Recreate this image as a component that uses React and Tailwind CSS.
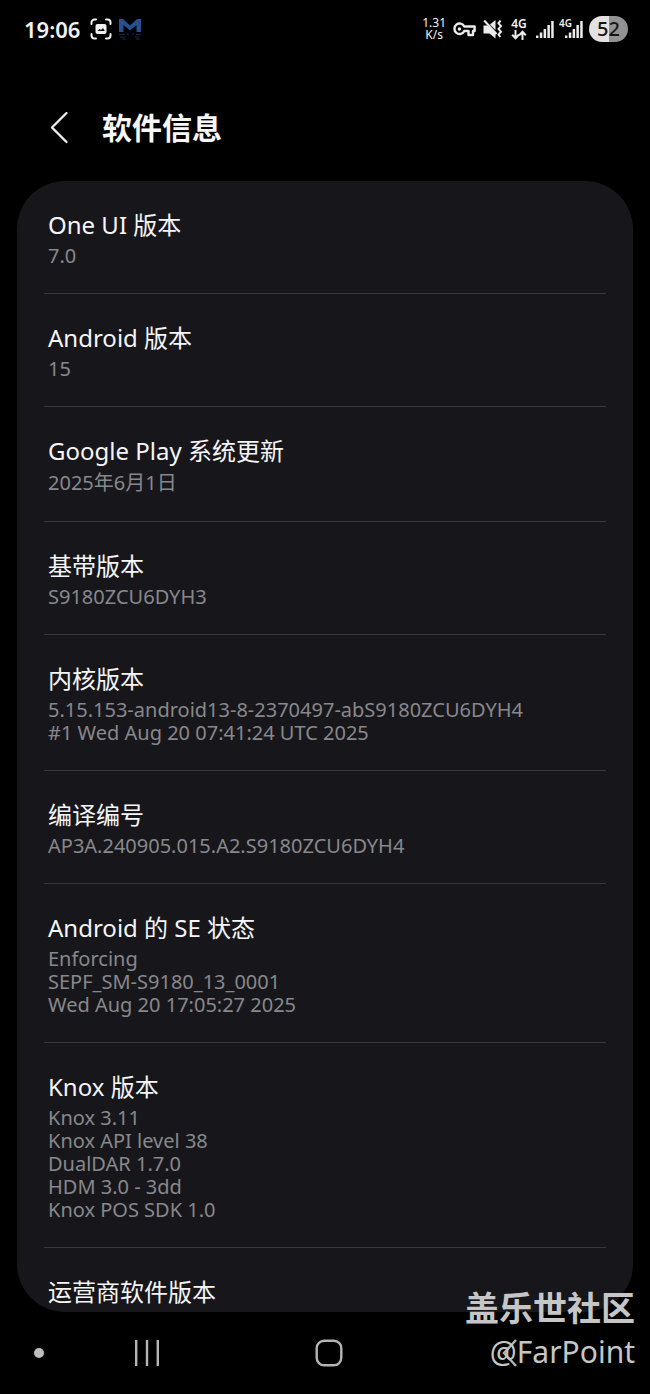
import React from 'react';

const items = [
  { title: 'One UI 版本', lines: ['7.0'] },
  { title: 'Android 版本', lines: ['15'] },
  { title: 'Google Play 系统更新', lines: ['2025年6月1日'], tall: true },
  { title: '基带版本', lines: ['S9180ZCU6DYH3'] },
  {
    title: '内核版本',
    lines: ['5.15.153-android13-8-2370497-abS9180ZCU6DYH4', '#1 Wed Aug 20 07:41:24 UTC 2025'],
  },
  { title: '编译编号', lines: ['AP3A.240905.015.A2.S9180ZCU6DYH4'] },
  {
    title: 'Android 的 SE 状态',
    lines: ['Enforcing', 'SEPF_SM-S9180_13_0001', 'Wed Aug 20 17:05:27 2025'],
  },
  {
    title: 'Knox 版本',
    lines: ['Knox 3.11', 'Knox API level 38', 'DualDAR 1.7.0', 'HDM 3.0 - 3dd', 'Knox POS SDK 1.0'],
  },
];

const SignalBars = () => (
  <svg width="18" height="18" viewBox="0 0 18 18" fill="#ececec">
    <rect x="0" y="15.5" width="2.4" height="2.5" />
    <rect x="3.8" y="12.5" width="2.5" height="5.5" />
    <rect x="7.6" y="9" width="2.5" height="9" />
    <rect x="11.4" y="5" width="2.5" height="13" />
    <rect x="15.2" y="1" width="2.5" height="17" />
  </svg>
);

const StatusBar = () => (
  <div className="flex h-[58px] items-center justify-between pl-6 pr-[22px] text-[#f2f2f2]">
    <div className="flex items-center">
      <span className="text-[22px] leading-[26px] font-semibold">19:06</span>

      {/* Screenshot notification */}
      <svg className="ml-[10px]" width="22" height="22" viewBox="0 0 22 22" fill="none" stroke="#f0f0f0" strokeWidth="2" strokeLinecap="round">
        <path d="M1.5 6V4.5a3 3 0 0 1 3-3H6M16 1.5h1.5a3 3 0 0 1 3 3V6M20.5 16v1.5a3 3 0 0 1-3 3H16M6 20.5H4.5a3 3 0 0 1-3-3V16" />
        <rect x="5.5" y="6" width="11" height="10" rx="2" fill="#f0f0f0" stroke="none" />
        <path d="M7.5 13l2-2 1.5 1 2-2 1.8 3z" fill="#111" stroke="none" />
      </svg>

      {/* App badge */}
      <svg className="ml-[7px]" width="22" height="22" viewBox="0 0 22 22" fill="#27508f">
        <path d="M0 14V1h4l7 6.5L18 1h4v13h-4.5V7L11 12.5 4.5 7v7z" />
        <path d="M0 16h6v1H0zM8 16h2v1H8zM13 15.5h2v1h-2zM17 16h5v1h-5zM1 18.5h5v1H1zM16 18.5h4v1h-4zM3 20.5h4v1H3zM17 20.5h4v1h-4z" fill="#152b52" />
      </svg>
    </div>

    <div className="flex items-center">
      <div className="flex flex-col items-center text-[12px] leading-[12px]">
        <span>1.31</span>
        <span>K/s</span>
      </div>

      {/* VPN key */}
      <svg className="ml-[7px]" width="23" height="16" viewBox="0 0 23 16" fill="none" stroke="#ececec" strokeWidth="2.4" strokeLinejoin="round">
        <path d="M11.3 5.5H21.6v4.5H20v4h-4.5V10h-4.2A5.2 5.2 0 1 1 11.3 5.5z" />
        <circle cx="6.4" cy="8" r="1.7" fill="#ececec" stroke="none" />
      </svg>

      {/* Vibrate / muted */}
      <svg className="ml-[7px]" width="20" height="20" viewBox="0 0 20 20" fill="#ececec">
        <path d="M0.5 6.5H4.5L12.5 14.5V19.5L6.5 14.5H0.5z" />
        <path d="M7 5.5L12.5 1v10z" />
        <path d="M1.2 1.5L13.5 15" stroke="#ececec" strokeWidth="2" />
        <path d="M17.5 1.5l-2 2.800 2.500 2.800-2.500 2.800 2.500 2.800-2.500 2.800 1.800 2.500" fill="none" stroke="#ececec" strokeWidth="2" />
      </svg>

      <div className="ml-[8px] flex flex-col items-center">
        <span className="text-[12px] leading-[12px] font-semibold">4G</span>
        <svg width="16" height="10" viewBox="0 0 16 10" fill="none" stroke="#ececec" strokeWidth="2">
          <path d="M4.5 0v8M1.2 4.8l3.3 3.5 3.3-3.5M11.5 10V2M8.2 5.2l3.3-3.5 3.3 3.5" />
        </svg>
      </div>

      <div className="ml-[9px]">
        <SignalBars />
      </div>

      <div className="relative ml-[11px]">
        <span className="absolute -left-1.5 -top-0.5 text-[10px] leading-[10px] font-semibold">4G</span>
        <SignalBars />
      </div>

      <div className="ml-[6px] flex h-[26px] w-[39px] items-center justify-center rounded-full bg-linear-to-r from-[#e2e2e2] from-50% to-[#929292] to-50% text-[20px] leading-[26px] font-medium text-[#151515]">
        52
      </div>
    </div>
  </div>
);

const NavBar = () => (
  <nav className="flex h-[82px] items-center pr-[49px]">
    <div className="w-14 pl-[34px]">
      <div className="h-[10px] w-[10px] rounded-full bg-[#bdbdbd]" />
    </div>
    <button type="button" aria-label="最近" className="flex flex-1 justify-center">
      <svg width="26" height="26" viewBox="0 0 26 26" stroke="#b4b4b4" strokeWidth="2.4">
        <path d="M2.2 0v26M13 0v26M23.8 0v26" />
      </svg>
    </button>
    <button type="button" aria-label="主屏幕" className="flex flex-1 justify-center">
      <svg width="28" height="28" viewBox="0 0 28 28" fill="none" stroke="#b4b4b4" strokeWidth="2.4">
        <rect x="1.7" y="1.7" width="24.6" height="24.6" rx="7.5" />
      </svg>
    </button>
    <button type="button" aria-label="返回" className="flex flex-1 justify-center">
      <svg width="16" height="28" viewBox="0 0 16 28" fill="none" stroke="#b4b4b4" strokeWidth="2.4">
        <path d="M14 1L2 14l12 13" />
      </svg>
    </button>
  </nav>
);

const App = () => {
  return (
    <div className="relative flex min-h-screen flex-col bg-black font-['Noto_Sans','Noto_Sans_CJK_SC',sans-serif]">
      <StatusBar />

      <header className="flex h-[123px] items-center pl-[50px] pt-4">
        <button type="button" aria-label="返回">
          <svg width="18" height="32" viewBox="0 0 18 32" fill="none" stroke="#f2f2f2" strokeWidth="2.2" strokeLinecap="round" strokeLinejoin="round">
            <path d="M16.5 1L2 15.5 16.5 30" />
          </svg>
        </button>
        <h1 className="ml-[34px] text-[30px] leading-[40px] font-bold text-[#f7f7f7]">软件信息</h1>
      </header>

      <main className="mx-[17px] flex-1 overflow-hidden rounded-[48px] bg-[#17171b]">
        {items.map((item) => (
          <section key={item.title} className="mx-[27px] border-b border-[#38383c] px-1 pb-[26px] pt-7">
            <h2 className="text-[24px] leading-[32px] text-[#f5f5f7]">{item.title}</h2>
            <div className={item.tall ? 'mt-[3px] text-[20px] leading-[25px] text-[#88888c]' : 'mt-[3px] text-[20px] leading-[23px] text-[#88888c]'}>
              {item.lines.map((line) => (
                <p key={line}>{line}</p>
              ))}
            </div>
          </section>
        ))}
        <section className="mx-[27px] px-1 pb-1 pt-7">
          <h2 className="text-[24px] leading-[32px] text-[#f5f5f7]">运营商软件版本</h2>
        </section>
      </main>

      <NavBar />

      {/* Community watermark */}
      <div className="absolute bottom-[20px] right-[15px] text-right text-[#c6c6c6]">
        <p className="text-[34px] leading-[44px] font-bold">盖乐世社区</p>
        <p className="text-[30px] leading-[44px]">@FarPoint</p>
      </div>
    </div>
  );
};

export default App;
